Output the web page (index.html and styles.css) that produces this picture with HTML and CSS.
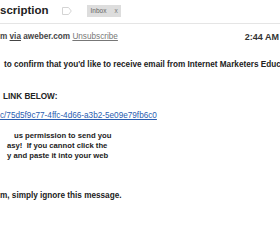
FILE: index.html
```html
<!DOCTYPE html>
<html>
<head>
<meta charset="utf-8">
<link rel="stylesheet" href="styles.css">
</head>
<body>
<div class="header">
  <h1 class="subject">scription</h1>
  <svg class="marker" width="10" height="8" viewBox="0 0 10 8"><path d="M0.5 0.5 H6.5 L9.3 4 L6.5 7.5 H0.5 Z" fill="none" stroke="#d4d4d4" stroke-width="1"/></svg>
  <span class="tag"><span class="tag-name">Inbox</span><span class="tag-x">x</span></span>
</div>
<div class="meta">
  <span class="sender">m <u>via</u> aweber.com <a class="unsub" href="#">Unsubscribe</a></span>
  <span class="time">2:44 AM</span>
</div>
<div class="content">
  <p class="line p1">to confirm that you'd like to receive email from Internet Marketers Educ</p>
  <p class="line p2">LINK BELOW:</p>
  <p class="line p3"><a class="link" href="#">c/75d5f9c77-4ffc-4d66-a3b2-5e09e79fb6c0</a></p>
  <div class="para">
    <p class="line in-14">us permission to send you</p>
    <p class="line in-7">asy!&nbsp; If you cannot click the</p>
    <p class="line in-7">y and paste it into your web</p>
  </div>
  <p class="line last">m, simply ignore this message.</p>
</div>
</body>
</html>
```

FILE: styles.css
```css
html, body {
  margin: 0;
  padding: 0;
  background: #ffffff;
}
body {
  width: 280px;
  height: 245px;
  overflow: hidden;
  font-family: "Liberation Sans", Arial, sans-serif;
  color: #222222;
}
.header {
  display: flex;
  align-items: center;
  height: 23px;
  border-bottom: 1px solid #e5e5e5;
  white-space: nowrap;
}
.subject {
  margin: 0;
  font-size: 11.5px;
  font-weight: bold;
  line-height: 14px;
  color: #222222;
  margin-top: -3px;
}
.marker {
  margin-left: 13px;
  margin-top: -2px;
}
.tag {
  display: flex;
  align-items: center;
  margin-left: 15px;
  margin-top: -2px;
  width: 34px;
  height: 12px;
  background: #dddddd;
  font-size: 6.5px;
  color: #666666;
  box-sizing: border-box;
  padding-left: 4px;
}
.tag-name {
  flex: 1;
}
.tag-x {
  width: 6px;
  color: #777777;
}
.meta {
  display: flex;
  justify-content: space-between;
  margin-top: 8px;
  height: 10px;
  line-height: 10px;
  white-space: nowrap;
}
.sender {
  font-size: 8.2px;
  font-weight: bold;
  color: #444444;
}
.sender u {
  text-decoration: underline;
}
.unsub {
  color: #777777;
  font-weight: normal;
  text-decoration: underline;
}
.time {
  font-size: 9px;
  font-weight: bold;
  color: #333333;
  margin-right: 1px;
}
.content {
  font-size: 8.2px;
  font-weight: bold;
  line-height: 10px;
  white-space: nowrap;
}
.line {
  margin: 0;
}
.p1 {
  margin-top: 18px;
  padding-left: 4px;
}
.p2 {
  margin-top: 22px;
  padding-left: 3px;
}
.p3 {
  margin-top: 9px;
}
.link {
  color: #2a5db0;
  font-weight: normal;
  text-decoration: underline;
}
.para {
  margin-top: 10px;
  font-size: 7.7px;
}
.in-14 {
  padding-left: 14px;
}
.in-7 {
  padding-left: 7px;
}
.last {
  margin-top: 30px;
}
```
